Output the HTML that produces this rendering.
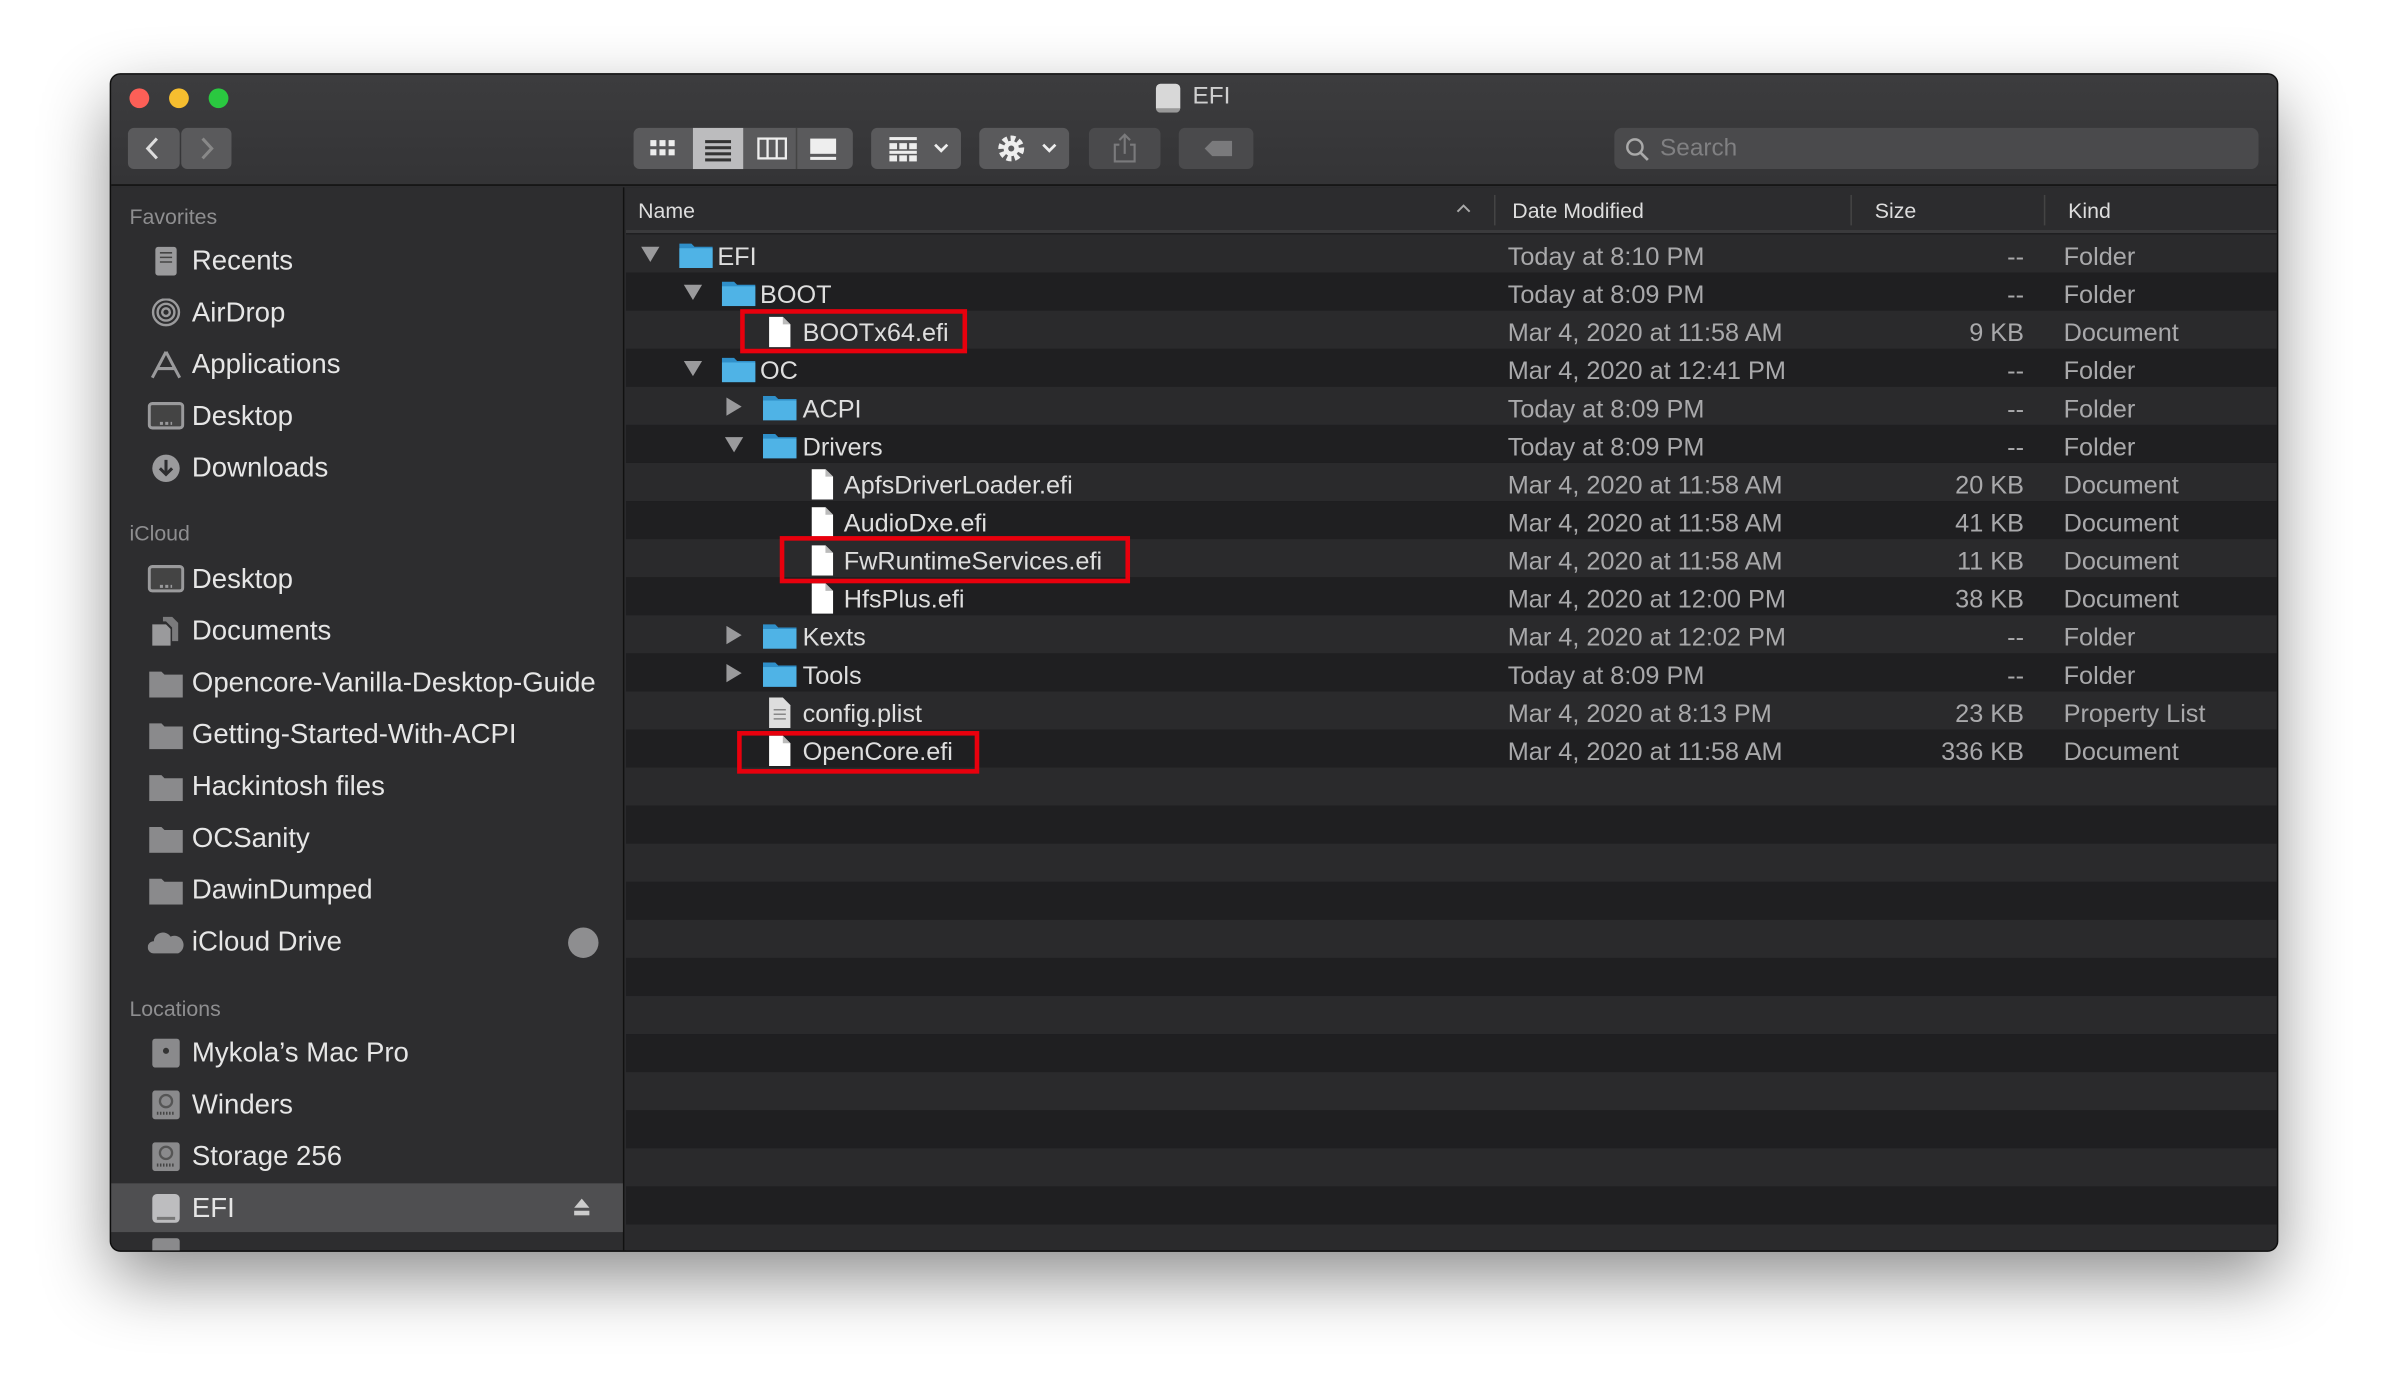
<!DOCTYPE html>
<html><head><meta charset="utf-8"><style>
*{margin:0;padding:0;box-sizing:border-box}
html,body{width:2388px;height:1398px;background:#fff;overflow:hidden}
#s{position:absolute;left:0;top:0;width:1568px;height:918px;transform:scale(1.52296);transform-origin:0 0;font-family:"Liberation Sans",sans-serif}
.win{position:absolute;left:73px;top:49px;width:1422px;height:772px;border-radius:6px;overflow:hidden;background:#2d2d2f;box-shadow:0 18px 45px rgba(0,0,0,.45),0 0 0 1px #111}
.tb{position:absolute;left:0;top:0;width:1422px;height:73px;background:linear-gradient(#3c3c3e,#343436);border-bottom:1px solid #111}
.a{position:absolute}
.dot{position:absolute;top:9px;width:13px;height:13px;border-radius:50%}
.btn{position:absolute;top:35px;height:27px;background:#5a5a5c;border-radius:4px}
.side{position:absolute;left:0;top:74px;width:337px;height:698px;background:#2d2d2f;border-right:1px solid #111}
.sh{position:absolute;left:12px;font-size:14px;color:#8e8e90}
.si{position:absolute;left:53px;font-size:18.1px;color:#e6e6e6;white-space:nowrap;margin-top:-1.5px}
.ic{position:absolute;left:24px;width:24px;height:19px}
.main{position:absolute;left:338px;top:74px;width:1084px;height:698px;background:#1f1f21}
.hdr{position:absolute;left:0;top:0;width:1084px;height:30px;background:#2c2c2e;border-bottom:2px solid #3a3a3c;font-size:14px;color:#ddd}
.row{position:absolute;left:0;width:1084px;height:25px;background:#1f1f21}
.row.l{background:#2a2a2c}
.t{position:absolute;font-size:16.6px;color:#dedede;top:5px;white-space:nowrap}
.g{position:absolute;font-size:16.6px;color:#a9a9ab;top:5px;white-space:nowrap}
.d{left:579px}.z{right:166px}.k{left:944px}
.tri{position:absolute;top:8px;width:0;height:0}
.down{border-left:6px solid transparent;border-right:6px solid transparent;border-top:10px solid #9a9a9c}
.right{border-top:6px solid transparent;border-bottom:6px solid transparent;border-left:10px solid #9a9a9c;top:7px}
.box{position:absolute;border:3px solid #e8000d}
.fd,.fl{position:absolute;top:5px}
</style></head><body><div id="s">
<svg width="0" height="0" style="position:absolute"><defs>
<g id="fold"><path d="M0 1h8l2 2h12v14H0z" fill="#2f8fc9"/><rect x="0" y="4" width="22" height="13" fill="#4fb3e6"/></g>
<g id="file"><path d="M1 0h9l5 5v15H1z" fill="#fff"/><path d="M10 0v5h5z" fill="#bbb"/></g>
</defs></svg>
<div class="win">
 <div class="tb">
  <div class="dot" style="left:12px;background:#fc5f57"></div>
  <div class="dot" style="left:38px;background:#f6be2f"></div>
  <div class="dot" style="left:64px;background:#2ac840"></div>
  <div class="a" style="left:686px;top:6px;width:16px;height:19px;background:#d8d8d8;border-radius:3px;border-bottom:3px solid #999"></div>
  <div class="a" style="left:710px;top:6px;font-size:16px;color:#cfcfcf">EFI</div>
  <div class="btn" style="left:11px;width:34px"><svg width="34" height="27"><path d="M19 7 L13 13.5 L19 20" stroke="#ddd" stroke-width="2" fill="none"/></svg></div>
  <div class="btn" style="left:46px;width:33px"><svg width="33" height="27"><path d="M14 7 L20 13.5 L14 20" stroke="#888" stroke-width="2" fill="none"/></svg></div>
  <div class="btn" style="left:343px;width:144px">
   <div class="a" style="left:39px;top:0;width:33px;height:27px;background:#bcbcbe"></div>
   <svg class="a" width="144" height="27"><g fill="#eee"><rect x="11" y="8" width="4" height="4"/><rect x="17" y="8" width="4" height="4"/><rect x="23" y="8" width="4" height="4"/><rect x="11" y="14" width="4" height="4"/><rect x="17" y="14" width="4" height="4"/><rect x="23" y="14" width="4" height="4"/></g><g fill="#333"><rect x="47" y="8" width="17" height="2"/><rect x="47" y="12" width="17" height="2"/><rect x="47" y="16" width="17" height="2"/><rect x="47" y="20" width="17" height="2"/></g><rect x="82" y="7" width="18" height="13" fill="none" stroke="#eee" stroke-width="1.5"/><path d="M88 7v13M94 7v13" stroke="#eee" stroke-width="1.5"/><rect x="116" y="7" width="17" height="10" fill="#eee"/><rect x="116" y="19" width="17" height="2" fill="#eee"/><path d="M107 0v27" stroke="#444"/></svg>
  </div>
  <div class="btn" style="left:499px;width:59px"><svg width="59" height="27"><g fill="#eee"><rect x="12" y="6" width="18" height="2"/><rect x="12" y="10" width="5" height="4"/><rect x="18.5" y="10" width="5" height="4"/><rect x="25" y="10" width="5" height="4"/><rect x="12" y="15" width="18" height="2"/><rect x="12" y="18" width="5" height="4"/><rect x="18.5" y="18" width="5" height="4"/><rect x="25" y="18" width="5" height="4"/></g><path d="M42 11l4 4 4-4" stroke="#eee" stroke-width="1.8" fill="none"/></svg></div>
  <div class="btn" style="left:570px;width:59px"><svg width="59" height="27"><circle cx="21" cy="13.5" r="6.5" fill="none" stroke="#eee" stroke-width="4" stroke-dasharray="3 2"/><circle cx="21" cy="13.5" r="5" fill="#eee"/><circle cx="21" cy="13.5" r="2" fill="#5a5a5c"/><path d="M42 11l4 4 4-4" stroke="#eee" stroke-width="1.8" fill="none"/></svg></div>
  <div class="btn" style="left:642px;width:47px;background:#4a4a4c"><svg width="47" height="27"><path d="M20 11h-3v11h13v-11h-3M23.5 5v12M20 8l3.5-3.5 3.5 3.5" stroke="#7a7a7c" stroke-width="1.4" fill="none"/></svg></div>
  <div class="btn" style="left:701px;width:49px;background:#4a4a4c"><svg width="49" height="27"><path d="M17 13.5l5-5h13v10h-13z" fill="#7a7a7c"/></svg></div>
  <div class="a" style="left:987px;top:35px;width:423px;height:27px;background:#4a4a4c;border-radius:5px"><svg class="a" style="left:7px;top:6px" width="16" height="16"><circle cx="6.5" cy="6.5" r="5" stroke="#aaa" stroke-width="1.6" fill="none"/><path d="M10 10l5 5" stroke="#aaa" stroke-width="1.8"/></svg><div class="a" style="left:30px;top:5px;font-size:16px;color:#808082">Search</div></div>
 </div>
 <div class="side">
  <div class="sh" style="top:11px">Favorites</div>
  <svg class="ic" style="top:39px" viewBox="0 0 24 19"><rect x="5" y="0" width="14" height="19" rx="2" fill="#9a9a9c"/><path d="M8 4h8M8 7h8M8 10h8" stroke="#444"/></svg><div class="si" style="top:39px">Recents</div>
  <svg class="ic" style="top:73px" viewBox="0 0 24 19"><g fill="none" stroke="#9a9a9c" stroke-width="1.6"><circle cx="12" cy="9" r="2.5"/><circle cx="12" cy="9" r="5.5"/><circle cx="12" cy="9" r="8.5"/></g></svg><div class="si" style="top:73px">AirDrop</div>
  <svg class="ic" style="top:107px" viewBox="0 0 24 19"><path d="M12 1L3 18M12 1l9 17M6 12h12" stroke="#9a9a9c" stroke-width="2" fill="none"/></svg><div class="si" style="top:107px">Applications</div>
  <svg class="ic" style="top:141px" viewBox="0 0 24 19"><rect x="1" y="1" width="22" height="16" rx="2" fill="#444" stroke="#9a9a9c" stroke-width="2"/><path d="M8 14h8" stroke="#9a9a9c" stroke-dasharray="2 1.5" stroke-width="2"/></svg><div class="si" style="top:141px">Desktop</div>
  <svg class="ic" style="top:175px" viewBox="0 0 24 19"><circle cx="12" cy="9.5" r="9" fill="#9a9a9c"/><path d="M12 4v9M8 9.5l4 4 4-4" stroke="#2d2d2f" stroke-width="2" fill="none"/></svg><div class="si" style="top:175px">Downloads</div>
  <div class="sh" style="top:219px">iCloud</div>
  <svg class="ic" style="top:248px" viewBox="0 0 24 19"><rect x="1" y="1" width="22" height="16" rx="2" fill="#444" stroke="#9a9a9c" stroke-width="2"/><path d="M8 14h8" stroke="#9a9a9c" stroke-dasharray="2 1.5" stroke-width="2"/></svg><div class="si" style="top:248px">Desktop</div>
  <svg class="ic" style="top:282px" viewBox="0 0 24 19"><path d="M3 5h9l3 3v11H3z" fill="#9a9a9c"/><path d="M10 0h6l4 4v12h-4V7l-4-4h-2z" fill="#7a7a7c"/></svg><div class="si" style="top:282px">Documents</div>
  <svg class="ic" style="top:316px" viewBox="0 0 24 19"><path d="M1 2h8l2 2h12v15H1z" fill="#8a8a8c"/></svg><div class="si" style="top:316px">Opencore-Vanilla-Desktop-Guide</div>
  <svg class="ic" style="top:350px" viewBox="0 0 24 19"><path d="M1 2h8l2 2h12v15H1z" fill="#8a8a8c"/></svg><div class="si" style="top:350px">Getting-Started-With-ACPI</div>
  <svg class="ic" style="top:384px" viewBox="0 0 24 19"><path d="M1 2h8l2 2h12v15H1z" fill="#8a8a8c"/></svg><div class="si" style="top:384px">Hackintosh files</div>
  <svg class="ic" style="top:418px" viewBox="0 0 24 19"><path d="M1 2h8l2 2h12v15H1z" fill="#8a8a8c"/></svg><div class="si" style="top:418px">OCSanity</div>
  <svg class="ic" style="top:452px" viewBox="0 0 24 19"><path d="M1 2h8l2 2h12v15H1z" fill="#8a8a8c"/></svg><div class="si" style="top:452px">DawinDumped</div>
  <svg class="ic" style="top:486px" viewBox="0 0 24 19"><path d="M4 17a4 4 0 0 1 0-8 6 6 0 0 1 11-3 5 5 0 0 1 5 11z" fill="#8a8a8c"/></svg><div class="si" style="top:486px">iCloud Drive</div>
  <div class="a" style="left:300px;top:486px;width:20px;height:20px;border-radius:50%;background:#8e8e90"></div>
  <div class="sh" style="top:531px">Locations</div>
  <svg class="ic" style="top:559px" viewBox="0 0 24 19"><rect x="3" y="0" width="18" height="19" rx="2" fill="#8a8a8c"/><circle cx="12" cy="8" r="2" fill="#333"/></svg><div class="si" style="top:559px">Mykola’s Mac Pro</div>
  <svg class="ic" style="top:593px" viewBox="0 0 24 19"><rect x="3" y="0" width="18" height="19" rx="2" fill="#8a8a8c"/><circle cx="12" cy="7" r="4" fill="none" stroke="#555" stroke-width="1.5"/><path d="M6 15h12" stroke="#444" stroke-width="2" stroke-dasharray="1 1"/></svg><div class="si" style="top:593px">Winders</div>
  <svg class="ic" style="top:627px" viewBox="0 0 24 19"><rect x="3" y="0" width="18" height="19" rx="2" fill="#8a8a8c"/><circle cx="12" cy="7" r="4" fill="none" stroke="#555" stroke-width="1.5"/><path d="M6 15h12" stroke="#444" stroke-width="2" stroke-dasharray="1 1"/></svg><div class="si" style="top:627px">Storage 256</div>
  <div class="a" style="left:0;top:654px;width:336px;height:32px;background:#4f4f51"></div>
  <svg class="ic" style="top:661px" viewBox="0 0 24 19"><rect x="3" y="0" width="18" height="19" rx="3" fill="#bdbdbf"/><path d="M6 16h12" stroke="#777" stroke-width="2"/></svg><div class="si" style="top:661px">EFI</div>
  <svg class="a" style="left:303px;top:663px" width="12" height="14"><path d="M6 1l5 6H1z" fill="#ccc"/><rect x="1" y="9" width="10" height="3" fill="#ccc"/></svg>
  <svg class="ic" style="top:690px" viewBox="0 0 24 19"><rect x="3" y="0" width="18" height="19" rx="2" fill="#8a8a8c"/></svg>
 </div>
 <div class="main">
  <div class="row l" style="top:31px"><div class="tri down" style="left:10px"></div><svg class="fd" style="left:35px" width="22" height="17"><use href="#fold"/></svg><div class="t" style="left:60px">EFI</div><div class="g d">Today at 8:10 PM</div><div class="g z">--</div><div class="g k">Folder</div></div>
  <div class="row" style="top:56px"><div class="tri down" style="left:37.5px"></div><svg class="fd" style="left:62.5px" width="22" height="17"><use href="#fold"/></svg><div class="t" style="left:88px">BOOT</div><div class="g d">Today at 8:09 PM</div><div class="g z">--</div><div class="g k">Folder</div></div>
  <div class="row l" style="top:81px"><svg class="fl" style="left:93px;top:4px" width="16" height="20"><use href="#file"/></svg><div class="t" style="left:116px">BOOTx64.efi</div><div class="g d">Mar 4, 2020 at 11:58 AM</div><div class="g z">9 KB</div><div class="g k">Document</div></div>
  <div class="row" style="top:106px"><div class="tri down" style="left:37.5px"></div><svg class="fd" style="left:62.5px" width="22" height="17"><use href="#fold"/></svg><div class="t" style="left:88px">OC</div><div class="g d">Mar 4, 2020 at 12:41 PM</div><div class="g z">--</div><div class="g k">Folder</div></div>
  <div class="row l" style="top:131px"><div class="tri right" style="left:66px"></div><svg class="fd" style="left:90px" width="22" height="17"><use href="#fold"/></svg><div class="t" style="left:116px">ACPI</div><div class="g d">Today at 8:09 PM</div><div class="g z">--</div><div class="g k">Folder</div></div>
  <div class="row" style="top:156px"><div class="tri down" style="left:65px"></div><svg class="fd" style="left:90px" width="22" height="17"><use href="#fold"/></svg><div class="t" style="left:116px">Drivers</div><div class="g d">Today at 8:09 PM</div><div class="g z">--</div><div class="g k">Folder</div></div>
  <div class="row l" style="top:181px"><svg class="fl" style="left:120.5px;top:4px" width="16" height="20"><use href="#file"/></svg><div class="t" style="left:143px">ApfsDriverLoader.efi</div><div class="g d">Mar 4, 2020 at 11:58 AM</div><div class="g z">20 KB</div><div class="g k">Document</div></div>
  <div class="row" style="top:206px"><svg class="fl" style="left:120.5px;top:4px" width="16" height="20"><use href="#file"/></svg><div class="t" style="left:143px">AudioDxe.efi</div><div class="g d">Mar 4, 2020 at 11:58 AM</div><div class="g z">41 KB</div><div class="g k">Document</div></div>
  <div class="row l" style="top:231px"><svg class="fl" style="left:120.5px;top:4px" width="16" height="20"><use href="#file"/></svg><div class="t" style="left:143px">FwRuntimeServices.efi</div><div class="g d">Mar 4, 2020 at 11:58 AM</div><div class="g z">11 KB</div><div class="g k">Document</div></div>
  <div class="row" style="top:256px"><svg class="fl" style="left:120.5px;top:4px" width="16" height="20"><use href="#file"/></svg><div class="t" style="left:143px">HfsPlus.efi</div><div class="g d">Mar 4, 2020 at 12:00 PM</div><div class="g z">38 KB</div><div class="g k">Document</div></div>
  <div class="row l" style="top:281px"><div class="tri right" style="left:66px"></div><svg class="fd" style="left:90px" width="22" height="17"><use href="#fold"/></svg><div class="t" style="left:116px">Kexts</div><div class="g d">Mar 4, 2020 at 12:02 PM</div><div class="g z">--</div><div class="g k">Folder</div></div>
  <div class="row" style="top:306px"><div class="tri right" style="left:66px"></div><svg class="fd" style="left:90px" width="22" height="17"><use href="#fold"/></svg><div class="t" style="left:116px">Tools</div><div class="g d">Today at 8:09 PM</div><div class="g z">--</div><div class="g k">Folder</div></div>
  <div class="row l" style="top:331px"><svg class="fl" style="left:93px;top:4px" width="16" height="20"><path d="M1 0h9l5 5v15H1z" fill="#ddd"/><path d="M4 8h8M4 11h8M4 14h8" stroke="#888"/></svg><div class="t" style="left:116px">config.plist</div><div class="g d">Mar 4, 2020 at 8:13 PM</div><div class="g z">23 KB</div><div class="g k">Property List</div></div>
  <div class="row" style="top:356px"><svg class="fl" style="left:93px;top:4px" width="16" height="20"><use href="#file"/></svg><div class="t" style="left:116px">OpenCore.efi</div><div class="g d">Mar 4, 2020 at 11:58 AM</div><div class="g z">336 KB</div><div class="g k">Document</div></div>
  <div class="row l" style="top:381px"></div>
  <div class="row" style="top:406px"></div>
  <div class="row l" style="top:431px"></div>
  <div class="row" style="top:456px"></div>
  <div class="row l" style="top:481px"></div>
  <div class="row" style="top:506px"></div>
  <div class="row l" style="top:531px"></div>
  <div class="row" style="top:556px"></div>
  <div class="row l" style="top:581px"></div>
  <div class="row" style="top:606px"></div>
  <div class="row l" style="top:631px"></div>
  <div class="row" style="top:656px"></div>
  <div class="row l" style="top:681px"></div>
  <div class="hdr">
   <div class="a" style="left:8px;top:7px">Name</div>
   <svg class="a" style="left:545px;top:10px" width="10" height="8"><path d="M1 6l4-4 4 4" stroke="#aaa" stroke-width="1.3" fill="none"/></svg>
   <div class="a" style="left:570px;top:5px;width:1px;height:20px;background:#444"></div>
   <div class="a" style="left:582px;top:7px">Date Modified</div>
   <div class="a" style="left:804px;top:5px;width:1px;height:20px;background:#444"></div>
   <div class="a" style="left:820px;top:7px">Size</div>
   <div class="a" style="left:931px;top:5px;width:1px;height:20px;background:#444"></div>
   <div class="a" style="left:947px;top:7px">Kind</div>
  </div>
 </div>
</div>
<div class="box" style="left:486px;top:203px;width:149px;height:29px"></div>
<div class="box" style="left:512px;top:352px;width:230px;height:31px"></div>
<div class="box" style="left:484px;top:480px;width:159px;height:28px"></div>
</div>
</body></html>
